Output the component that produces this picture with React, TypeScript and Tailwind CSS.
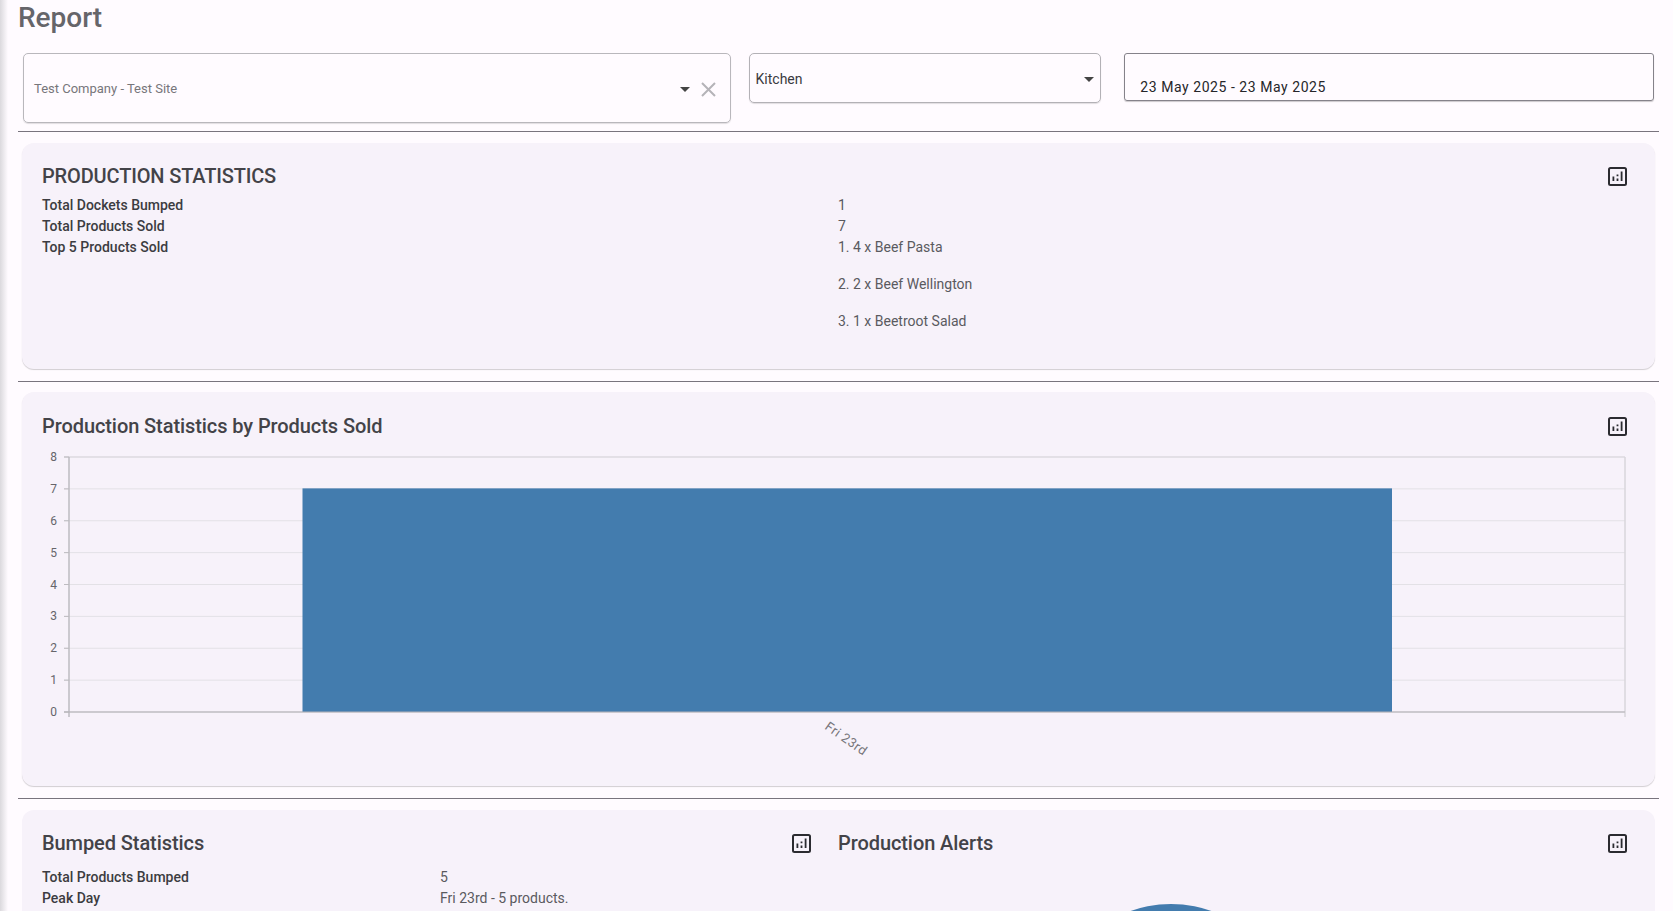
import type { ReactElement } from "react";

function ChartIcon(): ReactElement {
  return (
    <svg width="19" height="19" viewBox="0 0 19 19" className="shrink-0 text-[#2b2b30]" fill="none">
      <rect x="1" y="1" width="17" height="17" rx="1.5" stroke="currentColor" strokeWidth="2" />
      <path d="M4.5 9.5h1.8v4.5H4.5zM8.6 7.5h1.8v1.8H8.6zM8.6 11.5h1.8V14H8.6zM12.7 4.5h1.8V14h-1.8z" fill="currentColor" />
    </svg>
  );
}

function Caret({ className }: { className: string }): ReactElement {
  return <span className={`h-0 w-0 border-x-[5px] border-t-[5px] border-x-transparent border-t-[#444] ${className}`} />;
}

function Divider(): ReactElement {
  return <hr className="mr-[14px] border-t border-[#79747e]" />;
}

function CardTitle({ children, caps }: { children: string; caps?: boolean }): ReactElement {
  return (
    <div className="flex h-[24px] items-center justify-between">
      <h2 className={`text-[20px] font-medium leading-[24px] text-[#434348] ${caps ? "tracking-[-0.15px]" : "tracking-[-0.08px]"}`}>{children}</h2>
      <ChartIcon />
    </div>
  );
}

function StatRow({ label, value, col }: { label: string; value: string; col: string }): ReactElement {
  return (
    <div className="flex h-[21px] text-[14px] leading-[21px]">
      <div className={`${col} shrink-0 font-medium text-[#3c3c41]`}>{label}</div>
      <div className="text-[#5a5a5f]">{value}</div>
    </div>
  );
}

function BarChart(): ReactElement {
  const top = 7;
  const step = 31.875;
  const ticks = [8, 7, 6, 5, 4, 3, 2, 1, 0];
  const base = top + 8 * step;
  return (
    <svg width="1595" height="330" viewBox="0 0 1595 330" className="block">
      {ticks.map((t, i) => {
        const y = top + i * step;
        return (
          <g key={t}>
            <line x1="22" x2="1583" y1={y} y2={y} stroke={i === 0 || i === 8 ? "#cfcdd2" : "#e3e1e6"} />
            <line x1="22" x2="27" y1={y} y2={y} stroke="#bdbbc0" />
            <text x="15" y={y + 4} textAnchor="end" fontSize="12" fill="#66656a">{t}</text>
          </g>
        );
      })}
      <rect x="260.5" y={top + step - 0.5} width="1089.5" height={step * 7 + 0.5} fill="#437cae" />
      <line x1="27" x2="27" y1={top} y2={base + 5} stroke="#bdbbc0" strokeWidth="1.5" />
      <line x1="1583" x2="1583" y1={top} y2={base + 5} stroke="#d8d6db" strokeWidth="1.5" />
      <line x1="22" x2="1583" y1={base} y2={base} stroke="#b5b3b8" />
      <text x="804" y={base + 31} textAnchor="middle" fontSize="13" letterSpacing="0.5" fill="#77767b" transform={`rotate(35 804 ${base + 27})`}>Fri 23rd</text>
    </svg>
  );
}

export default function App(): ReactElement {
  return (
    <div className="relative h-[911px] overflow-hidden bg-[#fffbff] pl-[18px] font-['Roboto',sans-serif]">
      <div className="absolute inset-y-0 left-0 w-[8px] bg-gradient-to-r from-[#dbd9dd] to-[#fffbff]" />
      <h1 className="h-[53px] text-[28px] font-medium leading-[35px] text-[#66656a]">Report</h1>

      <div className="flex h-[78px] items-start pr-[19px]">
        <div className="ml-[5px] flex h-[70px] w-[708px] items-center rounded-[5px] border border-[#b9b7bc] pl-[10px] pr-[13px] pt-[2px] text-[13px] text-[#77767b] shadow-[0_1px_1px_rgba(0,0,0,0.12)]">
          <span className="flex-1">Test Company - Test Site</span>
          <Caret className="mr-[10px]" />
          <svg width="17" height="17" viewBox="0 0 17 17" stroke="#b5b3b8" strokeWidth="2">
            <path d="M2 2l13 13M15 2L2 15" />
          </svg>
        </div>
        <div className="ml-[18px] flex h-[50px] w-[353px] items-center justify-between rounded-[5px] border border-[#b3b1b6] pl-[6px] pr-[6px] pt-[2px] text-[14px] text-[#3a3a40] shadow-[0_1px_1px_rgba(0,0,0,0.12)]">
          <span>Kitchen</span>
          <Caret className="" />
        </div>
        <div className="ml-[23px] flex h-[48px] w-[530px] items-end rounded-[3px] border border-[#85828a] pb-[2px] pl-[15px] text-[14px] tracking-[0.55px] text-[#26262a] shadow-[0_1px_1px_rgba(0,0,0,0.2)]">
          23 May 2025 - 23 May 2025
        </div>
      </div>

      <Divider />

      <section className="ml-[4px] mr-[18px] mt-[11px] h-[226px] rounded-[12px] bg-[#f7f2fa] pl-[20px] pr-[28px] pt-[21px] shadow-[0_1px_1px_rgba(0,0,0,0.18)]">
        <CardTitle caps>PRODUCTION STATISTICS</CardTitle>
        <div className="mt-[7px]">
          <StatRow label="Total Dockets Bumped" value="1" col="w-[796px]" />
          <StatRow label="Total Products Sold" value="7" col="w-[796px]" />
          <StatRow label="Top 5 Products Sold" value="1. 4 x Beef Pasta" col="w-[796px]" />
          <div className="ml-[796px] mt-[16px] text-[14px] leading-[21px] text-[#5a5a5f]">2. 2 x Beef Wellington</div>
          <div className="ml-[796px] mt-[16px] text-[14px] leading-[21px] text-[#5a5a5f]">3. 1 x Beetroot Salad</div>
        </div>
      </section>

      <div className="mt-[12px]"><Divider /></div>

      <section className="ml-[4px] mr-[18px] mt-[10px] h-[394px] rounded-[12px] bg-[#f7f2fa] pl-[20px] pr-[28px] pt-[22px] shadow-[0_1px_1px_rgba(0,0,0,0.18)]">
        <CardTitle>Production Statistics by Products Sold</CardTitle>
        <div className="mt-[12px] w-[1590px]"><BarChart /></div>
      </section>

      <div className="mt-[12px]"><Divider /></div>

      <section className="ml-[4px] mr-[18px] mt-[11px] flex h-[400px] gap-[27px] rounded-[12px] bg-[#f7f2fa] pl-[20px] pr-[28px] pt-[21px]">
        <div className="w-[769px]">
          <CardTitle>Bumped Statistics</CardTitle>
          <div className="mt-[12px]">
            <StatRow label="Total Products Bumped" value="5" col="w-[398px]" />
            <StatRow label="Peak Day" value="Fri 23rd - 5 products." col="w-[398px]" />
          </div>
        </div>
        <div className="flex-1">
          <CardTitle>Production Alerts</CardTitle>
          <div className="ml-[213px] mt-[49px] h-[240px] w-[240px] rounded-full bg-[#437cae]" />
        </div>
      </section>
    </div>
  );
}
